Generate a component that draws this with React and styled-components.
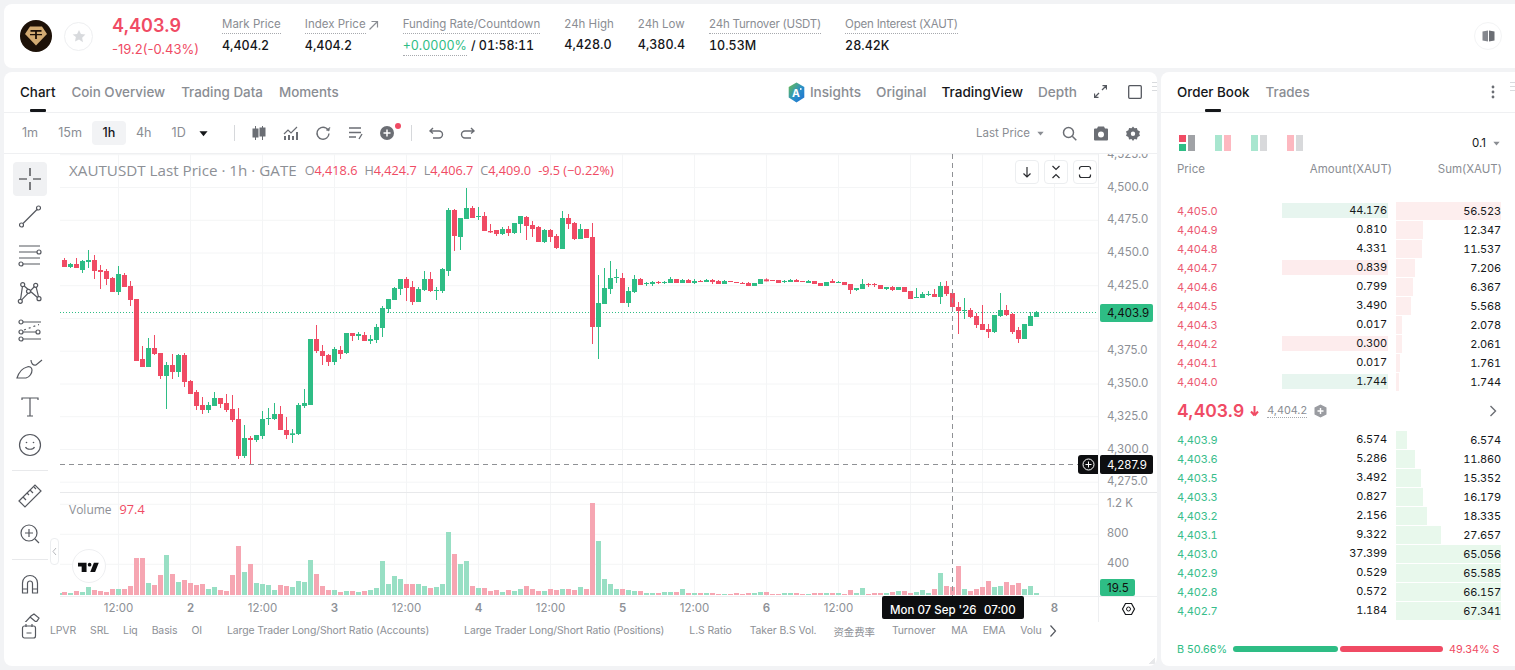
import styled, { createGlobalStyle } from "styled-components";

const RED = "#f04b64";
const GREEN = "#2ebd85";
const GRAY = "#8a8d93";
const ICON = "#55585f";

const candleA = `r 234 240 261 261;g 249 252 261 264;r 234 252 264 264;g 240 243 270 279;g 210 240 246 264;r 225 240 273 297;r 255 270 276 327;r 267 273 297 315;r 291 294 336 336;g 258 282 336 345;r 279 285 321 321;r 303 318 360 378;r 357 357 543 543;r 498 537 561 561;g 474 504 561 561;r 465 504 522 525;r 519 519 588 597;g 546 555 588 687;r 522 555 576 597;g 522 525 576 591;r 519 525 606 621;r 600 603 642 642;r 630 636 678 690;r 651 675 690 702;g 666 675 690 699;g 636 654 678 678;r 654 654 672 684;r 642 669 690 696;r 645 687 720 726;r 684 717 828 837;g 735 774 828 834;r 768 774 780 852;g 765 765 780 786;g 693 717 768 777;g 684 714 717 735;g 669 702 717 720;r 678 702 750 750;r 711 750 765 777;g 747 760 765 789;g 669 675 762 765;g 627 669 678 684;g 477 477 675 675;r 435 477 513 519;r 495 513 528 555;r 522 525 546 558;g 501 507 546 555;r 498 510 522 537;g 459 459 519 522;r 459 459 468 483;g 456 462 468 480;r 456 465 483 483;g 465 477 483 492;g 432 441 480 489;g 378 384 444 471;g 357 357 387 399;g 321 324 360 360;g 297 297 327 345;r 291 297 324 363`;
const candleB = `r 303 321 366 375;g 321 327 366 366;g 273 297 330 333;r 276 297 333 336;g 321 330 332 360;g 264 267 333 339;g 84 90 273 288;r 87 90 168 213;g 114 114 171 210;g 24 84 117 117;r 78 84 114 114;g 81 108 111 120;r 96 108 153 153;r 132 153 157 159;r 150 150 162 168;g 141 147 162 165;r 138 147 159 168;g 129 129 159 162;g 108 108 132 159;r 108 111 138 180;r 123 135 147 171;r 138 141 186 186;g 147 150 186 189;r 147 150 171 186;r 162 168 204 207;g 93 114 207 207;r 102 114 132 147;r 126 129 177 180;g 132 147 177 177;r 147 147 174 174;r 129 171 441 492;g 285 369 441 537;g 264 324 372 372;g 243 294 327 342;g 267 291 294 309;r 279 294 369 369;g 321 333 369 381;g 285 297 336 339;r 294 297 315 315;g 306 309 312 318;g 303 306 312 318;r 303 306 309 312;g 303 306 309 312;g 291 297 309 309;r 297 297 309 309;g 297 300 309 309;r 297 300 309 309;g 297 303 309 312;r 300 303 306 306;g 297 300 306 306;r 297 300 306 312;r 300 303 312 312;g 300 303 312 312;r 303 303 306 306;r 306 306 309 309;r 306 309 312 312;r 306 309 318 318;g 309 309 318 318;g 297 297 312 312`;
// this run was read from a crop starting 80px lower, so it gets its own base
const candleC = `r 55 58 64 64;r 60 60 63 63;r 60 60 69 69;g 60 63 66 69;g 57 60 66 66;r 57 60 66 66;r 63 63 66 66;g 60 63 69 69;r 63 63 72 72;r 69 69 78 78;g 66 66 78 78;r 57 63 69 69;g 63 66 69 69;r 66 66 75 75;r 72 72 90 102;g 84 84 90 93;g 57 72 87 87;r 69 72 75 81;r 69 72 75 81;r 75 75 87 87;g 81 81 87 90;r 78 81 90 93;g 81 81 90 90;r 81 81 96 96;r 93 93 117 117;g 84 111 114 114;g 96 102 114 114;g 93 102 105 108;r 87 102 111 111;g 66 78 111 132;r 63 78 102 108;r 87 99 141 156;r 126 141 153 222;g 114 150 153 177;r 144 150 171 174;r 159 168 195 204;r 135 192 210 210;r 192 207 216 234;g 165 165 216 219;g 99 150 168 171;r 135 150 165 168;r 159 162 216 222;r 201 210 237 249;g 192 192 237 237;g 156 168 198 198;g 153 156 171 171`;

const parseCandles = (text, base) =>
  text.split(";").map((row) => {
    const [color, ...rest] = row.split(" ");
    const [high, top, bottom, low] = rest.map((v) => base + Number(v) / 3);
    return { color, high, top, bottom, low };
  });

const candles = [
  ...parseCandles(candleA, 180),
  ...parseCandles(candleB, 180),
  ...parseCandles(candleC, 260),
];

const volumeTops = [
  291, 294, 288, 291, 276, 285, 288, 291, 282, 282, 282, 273, 189, 189, 264, 270, 240, 180, 237, 261, 255,
  264, 270, 267, 282, 276, 285, 288, 240, 153, 231, 207, 264, 267, 270, 285, 270, 273, 276, 258, 261, 195,
  237, 273, 285, 285, 291, 288, 288, 291, 288, 285, 279, 198, 267, 243, 252, 267, 267, 267, 273, 279, 276,
  267, 111, 177, 207, 198, 273, 279, 279, 288, 285, 291, 285, 288, 282, 273, 282, 288, 288, 282, 285, 282,
  282, 285, 276, 282, 24, 138, 252, 267, 282, 282, 285, 288, 288, 294, 294, 294, 291, 291, 291, 282, 294,
  294, 294, 294, 294, 297, 297, 297, 294, 297, 294, 294, 291, 291, 297, 297, 294, 294, 294, 297, 297, 294,
  294, 294, 294, 294, 297, 285, 294, 279, 297, 294, 294, 294, 291, 288, 288, 294, 291, 285, 294, 282, 234,
  273, 276, 213, 282, 288, 282, 276, 258, 276, 273, 261, 270, 264, 282, 273, 294,
];

const priceTicks = [
  ["4,525.0", 154.7], ["4,500.0", 187.5], ["4,475.0", 220.3], ["4,450.0", 253], ["4,425.0", 285.7],
  ["", 318.5], ["4,375.0", 351.2], ["4,350.0", 384], ["4,325.0", 416.7], ["4,300.0", 449.5], ["4,275.0", 482.2],
];
const volumeTicks = [["1.2 K", 504.3], ["800", 534.3], ["400", 564.3]];
const timeTicks = [
  ["12:00", 118.5], ["2", 190.5, true], ["12:00", 262.5], ["3", 334.5, true], ["12:00", 406.5], ["4", 478.5, true],
  ["12:00", 550.5], ["5", 622.5, true], ["12:00", 694.5], ["6", 766.5, true], ["12:00", 838.5], ["", 910.5],
  ["", 982.5], ["8", 1054.5, true],
];

const asks = [
  ["4,405.0", "44.176", "56.523", 105, "buy"],
  ["4,404.9", "0.810", "12.347", 27],
  ["4,404.8", "4.331", "11.537", 26],
  ["4,404.7", "0.839", "7.206", 19, "sell"],
  ["4,404.6", "0.799", "6.367", 17],
  ["4,404.5", "3.490", "5.568", 15],
  ["4,404.3", "0.017", "2.078", 6],
  ["4,404.2", "0.300", "2.061", 6, "sell"],
  ["4,404.1", "0.017", "1.761", 4],
  ["4,404.0", "1.744", "1.744", 3, "buy"],
];
const bids = [
  ["4,403.9", "6.574", "6.574", 11],
  ["4,403.6", "5.286", "11.860", 19],
  ["4,403.5", "3.492", "15.352", 25],
  ["4,403.3", "0.827", "16.179", 27],
  ["4,403.2", "2.156", "18.335", 31],
  ["4,403.1", "9.322", "27.657", 45],
  ["4,403.0", "37.399", "65.056", 105],
  ["4,402.9", "0.529", "65.585", 105],
  ["4,402.8", "0.572", "66.157", 105],
  ["4,402.7", "1.184", "67.341", 105],
];

const stats = [
  { label: "Mark Price", value: "4,404.2" },
  { label: "Index Price", value: "4,404.2", arrow: true },
  { label: "Funding Rate/Countdown", value: "+0.0000%", funding: true },
  { label: "24h High", value: "4,428.0", plain: true },
  { label: "24h Low", value: "4,380.4", plain: true },
  { label: "24h Turnover (USDT)", value: "10.53M", tight: true },
  { label: "Open Interest (XAUT)", value: "28.42K", tight: true },
];

const indicators = [
  ["LPVR", 0], ["SRL", 14], ["Liq", 14], ["Basis", 14], ["OI", 14],
  ["Large Trader Long/Short Ratio (Accounts)", 25], ["Large Trader Long/Short Ratio (Positions)", 35],
  ["L.S Ratio", 25], ["Taker B.S Vol.", 18], ["资金费率", 17], ["Turnover", 17], ["MA", 16], ["EMA", 15], ["Volume", 15],
];

const GlobalStyle = createGlobalStyle`
  html, body {
    margin: 0;
    height: 670px;
    overflow: hidden;
    background: #f2f3f5;
    font-family: Inter, "Noto Sans CJK SC", sans-serif;
  }
`;

const Page = styled.div`
  width: 1515px;
  height: 670px;
  padding: 4px 0 0 4px;
  box-sizing: border-box;
  display: flex;
  flex-direction: column;
  gap: 4px;
`;

const Card = styled.section`
  background: #fff;
  border-radius: 8px;
  position: relative;
  overflow: hidden;
`;

const TopBar = styled(Card)`
  height: 64px;
  display: flex;
  align-items: center;
  padding-left: 16px;
  border-radius: 8px 0 0 8px;
`;

const StarButton = styled.div`
  width: 27px;
  height: 27px;
  margin-left: 12px;
  border: 1px solid #eeeff1;
  border-radius: 50%;
  display: flex;
  align-items: center;
  justify-content: center;
`;

const PriceBlock = styled.div`
  width: 110px;
  margin-left: 19px;
`;

const LastPrice = styled.div`
  font-size: 18px;
  line-height: 24px;
  font-weight: 600;
  color: ${RED};
`;

const PriceChange = styled.div`
  font-size: 13px;
  line-height: 20px;
  margin-top: 1px;
  color: ${RED};
`;

const Stats = styled.div`
  display: flex;
  gap: 24px;
`;

const StatLabel = styled.div`
  font-size: 11.5px;
  line-height: 16px;
  letter-spacing: ${(p) => (p.$tight ? "-0.2px" : "0")};
  color: ${GRAY};
  display: flex;
  align-items: center;
  gap: 2px;
  white-space: nowrap;
`;

const Dotted = styled.span`
  border-bottom: ${(p) => (p.$off ? "none" : "1px dotted #a7a9ae")};
  padding-bottom: 1px;
`;

const StatValue = styled.div`
  font-size: 12.5px;
  line-height: 18px;
  margin-top: 3px;
  font-weight: 500;
  font-variant-numeric: tabular-nums;
  color: #15171a;
  display: flex;
  gap: 4px;
`;

const FundingValue = styled.span`
  color: ${GREEN};
  font-weight: 400;
  border-bottom: 1px dotted #a7a9ae;
`;

const TopAction = styled.div`
  position: absolute;
  right: 13px;
  top: 18px;
  width: 26px;
  height: 26px;
  border-radius: 50%;
  border: 1px solid #f3f4f5;
  display: flex;
  align-items: center;
  justify-content: center;
`;

const Main = styled.div`
  display: flex;
  gap: 4px;
  height: 594px;
`;

const ChartCard = styled(Card)`
  width: 1153px;
`;

const BookCard = styled(Card)`
  width: 354px;
  border-radius: 8px 0 0 8px;
`;

const TabBar = styled.div`
  height: 40px;
  border-bottom: 1px solid #eff0f2;
  display: flex;
  align-items: center;
  padding: 0 16px;
  gap: 16px;
`;

const Tab = styled.div`
  position: relative;
  height: 40px;
  line-height: 40px;
  font-size: 13.4px;
  font-weight: 500;
  white-space: nowrap;
  color: ${(p) => (p.$active ? "#15171a" : GRAY)};
  &::after {
    content: "";
    display: ${(p) => (p.$active ? "block" : "none")};
    position: absolute;
    left: 50%;
    bottom: 0;
    width: 16px;
    height: 3px;
    margin-left: -8px;
    background: #15171a;
    border-radius: 1px;
  }
`;

const ViewTabs = styled.div`
  margin-left: auto;
  display: flex;
  align-items: center;
  gap: 15px;
  font-size: 13.6px;
  font-weight: 500;
  color: ${GRAY};
`;

const ViewTab = styled.span`
  color: ${(p) => (p.$active ? "#15171a" : GRAY)};
`;

const InsightTab = styled.span`
  display: flex;
  align-items: center;
  gap: 5px;
`;

const WindowIcons = styled.div`
  display: flex;
  gap: 21px;
  margin-left: 2px;
  margin-right: -1px;
`;

const Handle = styled.div`
  position: absolute;
  top: 10px;
  right: 0;
  width: 5px;
  height: 9px;
  background: repeating-linear-gradient(#d9dbde 0 1px, #fff 1px 4px);
`;

const Toolbar = styled.div`
  height: 40px;
  border-bottom: 1px solid #eff0f2;
  display: flex;
  align-items: center;
  padding: 0 8px 0 8px;
`;

const Interval = styled.div`
  min-width: 14px;
  height: 24px;
  line-height: 24px;
  padding: 0 10px;
  font-size: 12.6px;
  text-align: center;
  border-radius: 4px;
  color: ${(p) => (p.$active ? "#15171a" : GRAY)};
  background: ${(p) => (p.$active ? "#f2f3f5" : "transparent")};
  font-weight: ${(p) => (p.$active ? 500 : 400)};
`;

const CaretBox = styled.div`
  width: 30px;
  padding-left: 3px;
  box-sizing: border-box;
  display: flex;
`;

const ToolDivider = styled.div`
  width: 1px;
  height: 16px;
  margin: 0 8px;
  background: #d6d8db;
`;

const ToolIcon = styled.div`
  position: relative;
  width: 32px;
  height: 32px;
  display: flex;
  align-items: center;
  justify-content: center;
`;

const RedDot = styled.span`
  position: absolute;
  top: 6px;
  right: 2px;
  width: 6px;
  height: 6px;
  border-radius: 50%;
  background: ${RED};
`;

const PriceSource = styled.div`
  margin-left: auto;
  margin-right: 9px;
  display: flex;
  align-items: center;
  gap: 7px;
  font-size: 11.5px;
  color: ${GRAY};
`;

const ChartBody = styled.div`
  position: relative;
  height: 468px;
  display: flex;
`;

const Rail = styled.div`
  width: 52px;
  height: 468px;
  flex: none;
  margin-right: 4px;
  overflow: hidden;
  padding-top: 8px;
  box-sizing: border-box;
  display: flex;
  flex-direction: column;
  align-items: center;
  gap: 4px;
`;

const RailButton = styled.div`
  width: 34px;
  height: 34px;
  flex: none;
  border-radius: 4px;
  display: flex;
  align-items: center;
  justify-content: center;
  background: ${(p) => (p.$active ? "#f0f1f3" : "transparent")};
`;

const RailDivider = styled.div`
  width: 36px;
  height: 1px;
  flex: none;
  margin: 4px 0;
  background: #e8e9eb;
`;

const Plot = styled.div`
  position: relative;
  width: 1097px;
  height: 468px;
`;

const PlotSvg = styled.svg`
  display: block;
  font-family: Inter, sans-serif;
`;

const Legend = styled.div`
  position: absolute;
  left: 9px;
  top: 7px;
  display: flex;
  align-items: center;
  height: 18px;
  font-family: "Open Sans", sans-serif;
  white-space: nowrap;
`;

const LegendTitle = styled.span`
  font-size: 15.2px;
  color: #8d9096;
  margin-right: 8px;
`;

const LegendItem = styled.span`
  font-size: 12.7px;
  color: ${RED};
  margin-right: 7px;
  & > i {
    font-style: normal;
    color: #8d9096;
  }
`;

const VolumeLegend = styled(Legend)`
  top: 346px;
`;

const VolumeTitle = styled.span`
  font-size: 12px;
  color: #8d9096;
  margin-right: 8px;
`;

const PaneButtons = styled.div`
  position: absolute;
  top: 6px;
  left: 955px;
  display: flex;
  gap: 5px;
`;

const PaneButton = styled.div`
  width: 22px;
  height: 22px;
  background: #fff;
  border: 1px solid #eceef0;
  border-radius: 4px;
  display: flex;
  align-items: center;
  justify-content: center;
`;

const TvBadge = styled.div`
  position: absolute;
  left: 12px;
  top: 395px;
  width: 32px;
  height: 32px;
  background: #fff;
  border: 1px solid #eeeff1;
  border-radius: 50%;
  display: flex;
  align-items: center;
  justify-content: center;
`;

const CollapseTab = styled.div`
  position: absolute;
  left: 46px;
  top: 384px;
  width: 7px;
  height: 25px;
  background: #fff;
  border: 1px solid #eceef0;
  border-radius: 4px;
  display: flex;
  align-items: center;
  justify-content: center;
`;

const IndicatorRow = styled.div`
  height: 18px;
  padding-left: 17px;
  display: flex;
  align-items: center;
`;

const IndicatorTrack = styled.div`
  width: 992px;
  margin-left: 13px;
  display: flex;
  overflow: hidden;
`;

const Indicator = styled.span`
  flex: none;
  font-size: 10.45px;
  letter-spacing: -0.1px;
  margin-left: ${(p) => p.$gap}px;
  color: #8d9096;
  white-space: nowrap;
`;

const NextButton = styled.div`
  margin-left: 7px;
  display: flex;
`;

const CornerMark = styled.div`
  position: absolute;
  right: 2px;
  bottom: 2px;
  width: 6px;
  height: 6px;
  background: linear-gradient(135deg, transparent 50%, #e7e8ea 50%);
`;

const MoreDots = styled.div`
  margin-left: auto;
  margin-right: 4px;
  display: flex;
`;

const LayoutRow = styled.div`
  display: flex;
  align-items: center;
  gap: 20px;
  padding: 22px 16px 0 18px;
  height: 16px;
`;

const LayoutIcon = styled.div`
  width: 16px;
  height: 16px;
  display: grid;
  grid-template-columns: 7px 7px;
  gap: 2px;
  & > span {
    background: ${(p) => p.$right};
  }
  & > span:first-child {
    background: ${(p) => p.$left};
  }
`;

const SplitLeft = styled.div`
  display: grid;
  gap: 2px;
  grid-template-rows: 7px 7px;
  & > b:first-child {
    background: ${RED};
  }
  & > b:last-child {
    background: ${GREEN};
  }
`;

const SplitRight = styled.span`
  background: #a0a2a6;
`;

const TickSize = styled.div`
  margin-left: auto;
  margin-right: -1px;
  display: flex;
  align-items: center;
  gap: 7px;
  font-size: 11.5px;
  color: #15171a;
`;

const BookHead = styled.div`
  display: grid;
  grid-template-columns: 105px 110px 110px;
  padding-left: 16px;
  margin-top: 10px;
  height: 16px;
  line-height: 16px;
  font-size: 11.5px;
  color: ${GRAY};
  & > span + span {
    text-align: right;
  }
`;

const Rows = styled.div`
  margin-top: ${(p) => p.$top || 0}px;
`;

const Row = styled.div`
  height: 19px;
  padding-left: 16px;
  display: grid;
  grid-template-columns: 105px 106px 105px;
  align-items: center;
  font-size: 11px;
  letter-spacing: -0.15px;
  font-variant-numeric: tabular-nums;
`;

const RowPrice = styled.span`
  color: ${(p) => (p.$side === "ask" ? "#ec5a72" : "#38bd8b")};
`;

const Amount = styled.span`
  height: 15px;
  line-height: 15px;
  padding-right: 1px;
  text-align: right;
  color: #15171a;
  background: ${(p) =>
    p.$mark === "buy" ? "#e7f5ef" : p.$mark === "sell" ? "#fdeced" : "transparent"};
`;

const Sum = styled.span`
  height: 18px;
  line-height: 18px;
  margin-left: 8px;
  width: 105px;
  text-align: right;
  color: #15171a;
  background-image: linear-gradient(${(p) => (p.$side === "ask" ? "#fdeeee, #fdeeee" : "#e8f8ec, #e8f8ec")});
  background-repeat: no-repeat;
  background-size: ${(p) => p.$width}px 100%;
`;

const MidRow = styled.div`
  height: 39px;
  padding: 0 16px;
  display: flex;
  align-items: center;
`;

const MidPrice = styled.span`
  font-size: 17.5px;
  font-weight: 600;
  color: ${RED};
`;

const MidArrow = styled.svg`
  margin-left: 6px;
`;

const MarkPrice = styled.span`
  font-size: 10.8px;
  color: ${GRAY};
  margin-left: 8px;
  margin-right: 7px;
  border-bottom: 1px dotted #a7a9ae;
`;

const MidChevron = styled.span`
  margin-left: auto;
  margin-right: 2px;
  display: flex;
`;

const Balance = styled.div`
  margin-top: 21px;
  padding: 0 14px 0 16px;
  display: flex;
  align-items: center;
  font-size: 10.8px;
  height: 16px;
`;

const BalanceText = styled.span`
  color: ${(p) => p.$color};
  white-space: nowrap;
`;

const BalanceBar = styled.div`
  width: 210px;
  height: 6px;
  margin: 0 6px 0 6px;
  display: flex;
  gap: 2px;
`;

const BalancePart = styled.span`
  flex: ${(p) => p.$share};
  background: ${(p) => p.$color};
  border-radius: 3px;
`;

const Stroke = ({ w = 20, h = 20, color = ICON, sw = 1.2, children }) => (
  <svg width={w} height={h} viewBox={`0 0 ${w} ${h}`} fill="none" stroke={color} strokeWidth={sw}>
    {children}
  </svg>
);

const TetherLogo = () => (
  <svg width="32" height="32" viewBox="0 0 32 32">
    <circle cx="16" cy="16" r="16" fill="#1d1108" />
    <path d="M10 6.500h12l5 7.500-11 11.500L5 14z" fill="#d2aa72" />
    <path d="M10.500 10h11v1.800h-4.600v7.200h-1.800v-7.200h-4.600zM10 14h12v1.200H10z" fill="#1d1108" />
  </svg>
);

const StarIcon = () => (
  <svg width="14" height="14" viewBox="0 0 24 24" fill="#d8dadd">
    <path d="M12 1.500l3.300 7 7.700 1-5.600 5.300 1.400 7.700L12 17.800l-6.800 3.700 1.400-7.700L1 9.500l7.700-1z" />
  </svg>
);

const InsightLogo = () => (
  <svg width="17" height="21" viewBox="0 0 17 21">
    <defs>
      <linearGradient id="insightFill" x1="0" y1="0" x2="1" y2="1">
        <stop offset="0" stopColor="#6cc04a" />
        <stop offset="0.55" stopColor="#2a8fc9" />
        <stop offset="1" stopColor="#1f6fd0" />
      </linearGradient>
    </defs>
    <path d="M8.500 0.500l7.800 4.600v10.300l-7.800 5-7.800-5V5.100z" fill="url(#insightFill)" />
    <text x="4" y="15" fontSize="10.500" fontWeight="700" fill="#fff" fontFamily="Inter, sans-serif">A</text>
    <circle cx="12.800" cy="7" r="0.900" fill="#fff" />
  </svg>
);

const CrossIcon = () => (
  <Stroke w={30} h={30} color="#2a2c30">
    <path d="M15 4v8M15 18v8M4 15h8M18 15h8" />
  </Stroke>
);

const TrendIcon = () => (
  <Stroke w={26} h={26}>
    <circle cx="4.500" cy="21" r="2" />
    <circle cx="21.500" cy="4" r="2" />
    <path d="M6 19.500L20 5.500" />
  </Stroke>
);

const FibIcon = () => (
  <Stroke w={26} h={26}>
    <path d="M2 4h21M2 10h19M2 16h21M6 22h17" />
    <circle cx="22" cy="10" r="2" fill="#fff" />
    <circle cx="4" cy="22" r="2" fill="#fff" />
  </Stroke>
);

const PatternIcon = () => (
  <Stroke w={26} h={26}>
    <path d="M3.300 21.300L5.700 4.700 22 18.700 18.700 5.300z" />
    <circle cx="3.300" cy="21.300" r="2" fill="#fff" />
    <circle cx="5.700" cy="4.700" r="2" fill="#fff" />
    <circle cx="11.500" cy="11.300" r="2" fill="#fff" />
    <circle cx="18.700" cy="5.300" r="2" fill="#fff" />
    <circle cx="22" cy="18.700" r="2" fill="#fff" />
  </Stroke>
);

const ForecastIcon = () => (
  <Stroke w={26} h={26}>
    <path d="M6 4h18M6 14h13M6 21h18" />
    <path d="M7 12L22 6.500" strokeDasharray="2 3" />
    <circle cx="4" cy="4" r="2" fill="#fff" />
    <circle cx="4" cy="14" r="2" fill="#fff" />
    <circle cx="21" cy="14" r="2" fill="#fff" />
    <circle cx="4" cy="21" r="2" fill="#fff" />
  </Stroke>
);

const BrushIcon = () => (
  <Stroke w={28} h={24}>
    <path d="M1 21h9c4-1 6-5 6-8s-3-4-5-3C7 11 3 15 1 21z" />
    <path d="M15 3c0 3 2 6 5 5l6-5" />
  </Stroke>
);

const TextToolIcon = () => (
  <Stroke w={22} h={22}>
    <path d="M3 4V2h16v2M11 2v18M8 20h6" />
  </Stroke>
);

const SmileIcon = () => (
  <Stroke w={24} h={24}>
    <circle cx="12" cy="12" r="10.500" />
    <path d="M7.500 14c1.500 3 7.500 3 9 0" />
    <circle cx="8.500" cy="9.500" r="0.800" fill={ICON} stroke="none" />
    <circle cx="15.500" cy="9.500" r="0.800" fill={ICON} stroke="none" />
  </Stroke>
);

const RulerIcon = () => (
  <Stroke w={26} h={26}>
    <path d="M2 18L18 2l6 6L8 24z" />
    <path d="M6 14l3 3M10 10l2 2M13 7l3 3M17 4l2 2" />
  </Stroke>
);

const ZoomIcon = () => (
  <Stroke w={22} h={22}>
    <circle cx="10" cy="10" r="8" />
    <path d="M10 6v8M6 10h8M16 16l4 4" />
  </Stroke>
);

const MagnetIcon = () => (
  <Stroke w={20} h={22}>
    <path d="M2.500 19V9a7.500 7.500 0 0 1 15 0v10h-5V9.500a2.500 2.500 0 0 0-5 0V19zM2.500 15h5M12.500 15h5" />
  </Stroke>
);

const PenIcon = () => (
  <Stroke w={22} h={20}>
    <path d="M2 14L12 3l3-2 5 4-2 3L8 18l-7 1zM11 4l6 5" />
  </Stroke>
);

const CalendarIcon = () => (
  <Stroke w={16} h={16}>
    <rect x="1.500" y="3" width="13" height="12" rx="2" />
    <path d="M5 1v3M11 1v3M5.500 10h5" />
  </Stroke>
);

const CandleIcon = () => (
  <Stroke w={16} h={16} sw={1} color="#6b6e74">
    <path d="M4.500 1v3M4.500 12v3M11.500 1v2M11.500 11v4" />
    <rect x="2" y="4" width="5" height="8" fill="#6b6e74" />
    <rect x="9" y="3" width="5" height="8" fill="#6b6e74" />
  </Stroke>
);

const IndicatorIcon = () => (
  <Stroke w={16} h={16} color="#6b6e74">
    <path d="M1 9l4-4 3 3 6-6" />
    <path d="M2 11v4M6 10v5M10 11v4M14 7v8" strokeWidth="2" />
  </Stroke>
);

const ReplayIcon = () => (
  <Stroke w={16} h={16} sw={1.400} color="#6b6e74">
    <path d="M14 8.500A6 6 0 1 1 11 3l2 1.500" />
    <path d="M15 2l-1 4-3-1" fill="#6b6e74" strokeWidth="0.500" />
  </Stroke>
);

const TemplateIcon = () => (
  <Stroke w={16} h={16} sw={1.400} color="#6b6e74">
    <path d="M2 3h12M2 7.500h12M2 12h7M12 14l3-5" />
  </Stroke>
);

const PlusCircle = () => (
  <svg width="16" height="16" viewBox="0 0 16 16">
    <circle cx="8" cy="8" r="7" fill="#6b6e74" />
    <path d="M8 4.500v7M4.500 8h7" stroke="#fff" strokeWidth="1.500" />
  </svg>
);

const UndoIcon = () => (
  <Stroke w={16} h={16} sw={1.400} color="#6b6e74">
    <path d="M5 3L2 6l3 2.500M2.500 6H11a3 3 0 0 1 0 7H5" />
  </Stroke>
);

const RedoIcon = () => (
  <Stroke w={16} h={16} sw={1.400} color="#6b6e74">
    <path d="M11 3l3 3-3 2.500M13.500 6H5a3 3 0 0 0 0 7h6" />
  </Stroke>
);

const SearchIcon = () => (
  <Stroke w={15} h={15} sw={1.500} color="#6b6e74">
    <circle cx="6.500" cy="6.500" r="5" />
    <path d="M10.300 10.300l4 4" />
  </Stroke>
);

const CameraIcon = () => (
  <svg width="14" height="15" viewBox="0 0 14 15" fillRule="evenodd">
    <path
      d="M4 0.500h6l1 2h2a1 1 0 0 1 1 1v10a1 1 0 0 1-1 1H1a1 1 0 0 1-1-1v-10a1 1 0 0 1 1-1h2zM7 5.500a3 3 0 1 0 0 6 3 3 0 0 0 0-6z"
      fill="#6b6e74"
    />
  </svg>
);

const GearIcon = () => (
  <svg width="14" height="15" viewBox="0 0 14 15" fillRule="evenodd">
    <path
      d="M7 0.500l1.500 1.800 2.400-.3.700 2.300L14 5.600l-.8 2.100.8 2.100-2.400 1.300-.7 2.300-2.400-.3L7 14.900l-1.500-1.800-2.400.3-.7-2.300L0 9.800l.8-2.100L0 5.600l2.400-1.300.7-2.300 2.400.3zM7 5.500a2.200 2.200 0 1 0 0 4.400 2.200 2.200 0 0 0 0-4.400z"
      fill="#6b6e74"
    />
  </svg>
);

const Caret = ({ size = 9, color = "#15171a" }) => (
  <svg width={size} height={size} viewBox="0 0 10 10">
    <path d="M0.500 2.500h9L5 8z" fill={color} />
  </svg>
);

const ChartCanvas = () => (
  <PlotSvg width="1097" height="468" viewBox="60 154 1097 468">
    {priceTicks.map(([, y]) => (
      <line key={y} x1="60" x2="1098" y1={y} y2={y} stroke="#f4f5f6" />
    ))}
    {volumeTicks.map(([, y]) => (
      <line key={y} x1="60" x2="1098" y1={y} y2={y} stroke="#f4f5f6" />
    ))}
    {timeTicks.map(([, x]) => (
      <line key={x} x1={x} x2={x} y1="154" y2="596" stroke="#f4f5f6" />
    ))}
    <line x1="60" x2="1157" y1="492.500" y2="492.500" stroke="#e8e9eb" />
    <line x1="1098.500" x2="1098.500" y1="154" y2="622" stroke="#eeeff1" />
    <line x1="60" x2="1157" y1="596.500" y2="596.500" stroke="#eeeff1" />

    <rect x="60" y="593" width="2" height="2" fill="#98dfc4" />
    {volumeTops.map((top, i) => {
      const y = 495 + top / 3;
      return (
        <rect key={i} x={62 + i * 6} y={y} width="5" height={595 - y} fill={candles[i].color === "r" ? "#f6a6b2" : "#98dfc4"} />
      );
    })}

    <line x1="60" x2="1098" y1="312.500" y2="312.500" stroke={GREEN} strokeDasharray="1 2" />

    {candles.map((c, i) => {
      const fill = c.color === "r" ? RED : GREEN;
      return (
        <g key={i} fill={fill}>
          <rect x={64 + i * 6} y={c.high} width="1" height={c.low - c.high} />
          <rect x={62 + i * 6} y={c.top} width="5" height={Math.max(c.bottom - c.top, 1)} />
        </g>
      );
    })}

    <line x1="60" x2="1078" y1="464.500" y2="464.500" stroke="#8f9195" strokeDasharray="5 4" />
    <line x1="952.500" x2="952.500" y1="154" y2="596" stroke="#8f9195" strokeDasharray="5 4" />

    {priceTicks.map(([label, y]) => (
      <text key={label + y} x="1107" y={y + 3} fontSize="11.500" fill="#8d9096">{label}</text>
    ))}
    {volumeTicks.map(([label, y]) => (
      <text key={label} x="1107" y={y + 3} fontSize="11.500" fill="#8d9096">{label}</text>
    ))}
    {timeTicks.map(([label, x, bold]) => (
      <text key={x} x={x} y="612" fontSize="11.500" textAnchor="middle" fontWeight={bold ? 600 : 400} fill="#8d9096">{label}</text>
    ))}

    <rect x="1100" y="304" width="53" height="18" rx="2" fill={GREEN} />
    <text x="1107" y="317" fontSize="11.500" fill="#111">4,403.9</text>

    <path d="M1081 455h17v19h-17a3 3 0 0 1-3-3v-13a3 3 0 0 1 3-3z" fill="#0d0e10" />
    <circle cx="1088.500" cy="464.500" r="5.500" fill="none" stroke="#fff" />
    <path d="M1088.500 461.500v6M1085.500 464.500h6" stroke="#fff" />
    <rect x="1100" y="455" width="53" height="19" rx="2" fill="#0d0e10" />
    <text x="1107" y="469" fontSize="11.500" fill="#fff">4,287.9</text>

    <rect x="1100" y="579" width="35" height="17" rx="2" fill={GREEN} />
    <text x="1107" y="592" fontSize="11.500" fill="#111">19.5</text>

    <rect x="882" y="596" width="142" height="23" rx="2" fill="#0d0e10" />
    <text x="890" y="614" fontSize="11.500" fontWeight="500" fill="#fff">Mon 07 Sep '26</text>
    <text x="984" y="614" fontSize="11.500" fontWeight="500" fill="#fff">07:00</text>

    <path d="M1122.500 609l3-5.500h6l3 5.500-3 5.500h-6z" fill="none" stroke="#15171a" strokeWidth="1.200" />
    <circle cx="1128.500" cy="609" r="2" fill="none" stroke="#15171a" />
  </PlotSvg>
);

const OrderRow = ({ row, side }) => (
  <Row>
    <RowPrice $side={side}>{row[0]}</RowPrice>
    <Amount $mark={row[4]}>{row[1]}</Amount>
    <Sum $side={side} $width={row[3]}>{row[2]}</Sum>
  </Row>
);

const App = () => (
  <>
    <GlobalStyle />
    <Page>
      <TopBar>
        <TetherLogo />
        <StarButton>
          <StarIcon />
        </StarButton>
        <PriceBlock>
          <LastPrice>4,403.9</LastPrice>
          <PriceChange>-19.2(-0.43%)</PriceChange>
        </PriceBlock>
        <Stats>
          {stats.map((s) => (
            <div key={s.label}>
              <StatLabel $tight={s.tight}>
                <Dotted $off={s.plain}>{s.label}</Dotted>
                {s.arrow && (
                  <Stroke w={11} h={11} color={GRAY}>
                    <path d="M1.500 9.500L9.500 1.500M3.500 1.500h6v6" />
                  </Stroke>
                )}
              </StatLabel>
              <StatValue>
                {s.funding ? (
                  <>
                    <FundingValue>{s.value}</FundingValue>
                    <span>/ 01:58:11</span>
                  </>
                ) : (
                  s.value
                )}
              </StatValue>
            </div>
          ))}
        </Stats>
        <TopAction>
          <svg width="13" height="12" viewBox="0 0 13 12">
            <path d="M0.500 1.500L6 0.500v11L0.500 10.500z" fill="#85888e" />
            <path d="M7 0.500l5.500 1v9L7 11.500z" fill="#6b6e74" />
          </svg>
        </TopAction>
      </TopBar>

      <Main>
        <ChartCard>
          <Handle />
          <TabBar>
            <Tab $active>Chart</Tab>
            <Tab>Coin Overview</Tab>
            <Tab>Trading Data</Tab>
            <Tab>Moments</Tab>
            <ViewTabs>
              <InsightTab>
                <InsightLogo />
                Insights
              </InsightTab>
              <ViewTab>Original</ViewTab>
              <ViewTab $active>TradingView</ViewTab>
              <ViewTab>Depth</ViewTab>
              <WindowIcons>
                <Stroke w={13} h={13} sw={1.300}>
                  <path d="M8 5L12.500 0.500M8.500 0.500h4v4M5 8L0.500 12.500M0.500 8.500v4h4" />
                </Stroke>
                <Stroke w={14} h={14} sw={1.300}>
                  <rect x="0.700" y="0.700" width="12.600" height="12.600" rx="1" />
                </Stroke>
              </WindowIcons>
            </ViewTabs>
          </TabBar>

          <Toolbar>
            {["1m", "15m", "1h", "4h", "1D"].map((t) => (
              <Interval key={t} $active={t === "1h"}>{t}</Interval>
            ))}
            <CaretBox>
              <Caret />
            </CaretBox>
            <ToolDivider />
            <ToolIcon><CandleIcon /></ToolIcon>
            <ToolIcon><IndicatorIcon /></ToolIcon>
            <ToolIcon><ReplayIcon /></ToolIcon>
            <ToolIcon><TemplateIcon /></ToolIcon>
            <ToolIcon>
              <PlusCircle />
              <RedDot />
            </ToolIcon>
            <ToolDivider />
            <ToolIcon><UndoIcon /></ToolIcon>
            <ToolIcon><RedoIcon /></ToolIcon>
            <PriceSource>
              Last Price
              <Caret size={7} color={GRAY} />
            </PriceSource>
            <ToolIcon><SearchIcon /></ToolIcon>
            <ToolIcon><CameraIcon /></ToolIcon>
            <ToolIcon><GearIcon /></ToolIcon>
          </Toolbar>

          <ChartBody>
            <Rail>
              <RailButton $active><CrossIcon /></RailButton>
              <RailButton><TrendIcon /></RailButton>
              <RailButton><FibIcon /></RailButton>
              <RailButton><PatternIcon /></RailButton>
              <RailButton><ForecastIcon /></RailButton>
              <RailButton><BrushIcon /></RailButton>
              <RailButton><TextToolIcon /></RailButton>
              <RailButton><SmileIcon /></RailButton>
              <RailDivider />
              <RailButton><RulerIcon /></RailButton>
              <RailButton><ZoomIcon /></RailButton>
              <RailDivider />
              <RailButton><MagnetIcon /></RailButton>
              <RailButton><PenIcon /></RailButton>
            </Rail>
            <Plot>
              <ChartCanvas />
              <Legend>
                <LegendTitle>XAUTUSDT Last Price · 1h · GATE</LegendTitle>
                <LegendItem><i>O</i>4,418.6</LegendItem>
                <LegendItem><i>H</i>4,424.7</LegendItem>
                <LegendItem><i>L</i>4,406.7</LegendItem>
                <LegendItem><i>C</i>4,409.0</LegendItem>
                <LegendItem>-9.5 (−0.22%)</LegendItem>
              </Legend>
              <VolumeLegend>
                <VolumeTitle>Volume</VolumeTitle>
                <LegendItem>97.4</LegendItem>
              </VolumeLegend>
              <PaneButtons>
                <PaneButton>
                  <Stroke w={12} h={12} color="#2a2c30">
                    <path d="M6 1v10M2.500 7.500L6 11l3.500-3.500" />
                  </Stroke>
                </PaneButton>
                <PaneButton>
                  <Stroke w={12} h={14} color="#2a2c30">
                    <path d="M2.500 1L6 4.500 9.500 1M2.500 13L6 9.500 9.500 13" />
                  </Stroke>
                </PaneButton>
                <PaneButton>
                  <Stroke w={14} h={14} color="#2a2c30">
                    <path d="M1.500 4.500v-1a2 2 0 0 1 2-2h7a2 2 0 0 1 2 2v1M1.500 9.500v1a2 2 0 0 0 2 2h7a2 2 0 0 0 2-2v-1" />
                  </Stroke>
                </PaneButton>
              </PaneButtons>
              <TvBadge>
                <svg width="22" height="11" viewBox="0 0 36 18">
                  <path d="M14 3H0v6h6v9h8zM28 18h-8l6-15h8z" fill="#0d0e10" />
                  <circle cx="19" cy="6" r="3" fill="#0d0e10" />
                </svg>
              </TvBadge>
            </Plot>
            <CollapseTab>
              <Stroke w={5} h={9} color="#b5b7bb" sw={1}>
                <path d="M4 1L1 4.500 4 8" />
              </Stroke>
            </CollapseTab>
          </ChartBody>

          <IndicatorRow>
            <CalendarIcon />
            <IndicatorTrack>
              {indicators.map(([name, gap]) => (
                <Indicator key={name} $gap={gap}>{name}</Indicator>
              ))}
            </IndicatorTrack>
            <NextButton>
              <Stroke w={8} h={14} color={ICON}>
                <path d="M1.500 1.500L6.500 7l-5 5.500" />
              </Stroke>
            </NextButton>
          </IndicatorRow>
          <CornerMark />
        </ChartCard>

        <BookCard>
          <Handle />
          <TabBar>
            <Tab $active>Order Book</Tab>
            <Tab>Trades</Tab>
            <MoreDots>
              <svg width="4" height="14" viewBox="0 0 4 14" fill="#6b6e74">
                <circle cx="2" cy="2" r="1.400" />
                <circle cx="2" cy="7" r="1.400" />
                <circle cx="2" cy="12" r="1.400" />
              </svg>
            </MoreDots>
          </TabBar>

          <LayoutRow>
            <LayoutIcon $right="#a0a2a6">
              <SplitLeft><b /><b /></SplitLeft>
              <SplitRight />
            </LayoutIcon>
            <LayoutIcon $left="#a8e6cf" $right="#fdb8c0"><span /><span /></LayoutIcon>
            <LayoutIcon $left="#a8e6cf" $right="#d8d9db"><span /><span /></LayoutIcon>
            <LayoutIcon $left="#fdb8c0" $right="#d8d9db"><span /><span /></LayoutIcon>
            <TickSize>
              0.1
              <Caret size={7} color={GRAY} />
            </TickSize>
          </LayoutRow>

          <BookHead>
            <span>Price</span>
            <span>Amount(XAUT)</span>
            <span>Sum(XAUT)</span>
          </BookHead>

          <Rows $top={24}>
            {asks.map((row) => (
              <OrderRow key={row[0]} row={row} side="ask" />
            ))}
          </Rows>

          <MidRow>
            <MidPrice>4,403.9</MidPrice>
            <MidArrow width="9" height="12" viewBox="0 0 9 12">
              <path d="M4.500 10.500L1 6.500M4.500 10.500L8 6.500M4.500 10.500V1" stroke={RED} strokeWidth="2" fill="none" />
            </MidArrow>
            <MarkPrice>4,404.2</MarkPrice>
            <svg width="13" height="14" viewBox="0 0 13 14">
              <path d="M6.500 0.500l6 3v7l-6 3-6-3v-7z" fill="#9a9ca1" />
              <path d="M6.500 4v6M3.500 7h6" stroke="#fff" strokeWidth="1.400" />
            </svg>
            <MidChevron>
              <Stroke w={8} h={12} color="#6b6e74" sw={1.400}>
                <path d="M1.500 1l5 5-5 5" />
              </Stroke>
            </MidChevron>
          </MidRow>

          <Rows>
            {bids.map((row) => (
              <OrderRow key={row[0]} row={row} side="bid" />
            ))}
          </Rows>

          <Balance>
            <BalanceText $color={GREEN}>B 50.66%</BalanceText>
            <BalanceBar>
              <BalancePart $share={50.66} $color={GREEN} />
              <BalancePart $share={49.34} $color={RED} />
            </BalanceBar>
            <BalanceText $color={RED}>49.34% S</BalanceText>
          </Balance>
        </BookCard>
      </Main>
    </Page>
  </>
);

export default App;
